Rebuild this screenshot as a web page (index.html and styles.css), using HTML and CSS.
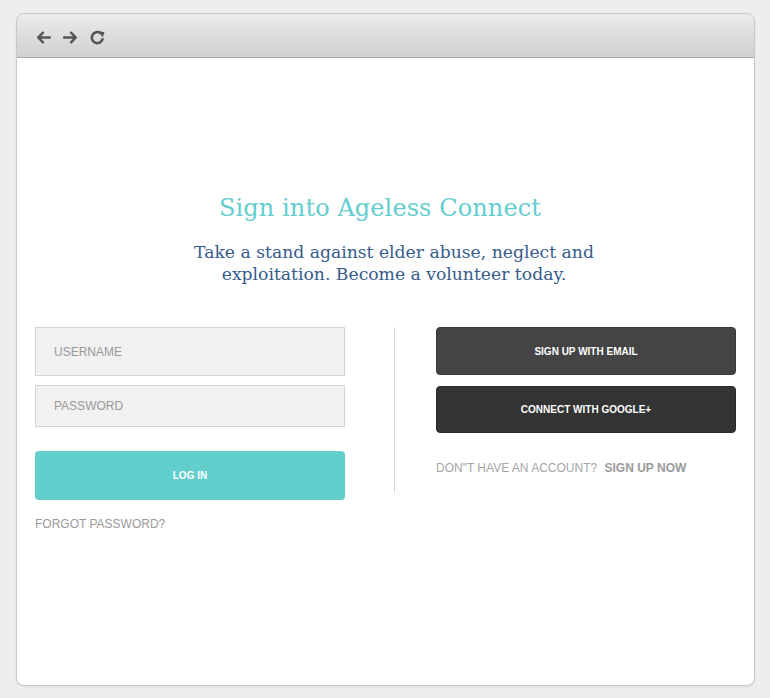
FILE: index.html
```html
<!DOCTYPE html>
<html>
<head>
<meta charset="utf-8">
<link rel="stylesheet" href="styles.css">
</head>
<body>
<div class="window">
  <div class="toolbar">
    <svg class="icon" viewBox="0 0 16 16" width="17" height="17"><path d="M14 8H3M7.5 3.5L3 8l4.5 4.5" fill="none" stroke="#555" stroke-width="2.3" stroke-linecap="round" stroke-linejoin="round"/></svg>
    <svg class="icon" viewBox="0 0 16 16" width="17" height="17"><path d="M2 8h11M8.5 3.5L13 8l-4.5 4.5" fill="none" stroke="#555" stroke-width="2.3" stroke-linecap="round" stroke-linejoin="round"/></svg>
    <svg class="icon" viewBox="0 0 16 16" width="17" height="17"><path d="M12.8 9.6A5.2 5.2 0 1 1 11 4" fill="none" stroke="#555" stroke-width="2.4" stroke-linecap="round"/><path d="M9 1.8L14.6 3 12.8 8Z" fill="#555"/></svg>
  </div>
  <div class="content">
    <h1 class="title">Sign into Ageless Connect</h1>
    <p class="subtitle">Take a stand against elder abuse, neglect and<br>exploitation. Become a volunteer today.</p>
    <div class="columns">
      <div class="left">
        <div class="field field-user">USERNAME</div>
        <div class="field field-pass">PASSWORD</div>
        <div class="btn btn-login">LOG IN</div>
        <div class="forgot">FORGOT PASSWORD?</div>
      </div>
      <div class="divider"></div>
      <div class="right">
        <div class="btn btn-email">SIGN UP WITH EMAIL</div>
        <div class="btn btn-google">CONNECT WITH GOOGLE+</div>
        <div class="signup">DON"T HAVE AN ACCOUNT? <span class="signup-now">SIGN UP NOW</span></div>
      </div>
    </div>
  </div>
</div>
</body>
</html>
```
FILE: styles.css
```css
html, body { margin: 0; padding: 0; }
body {
  background: #eeeeee;
  width: 770px;
  height: 698px;
  overflow: hidden;
  font-family: "Liberation Sans", Arial, sans-serif;
}
.window {
  margin: 13px 0 0 16px;
  width: 737px;
  height: 671px;
  background: #fff;
  border: 1px solid #c8c8c8;
  border-radius: 8px;
  overflow: hidden;
  box-shadow: 0 1px 2px rgba(0,0,0,0.08);
}
.toolbar {
  box-sizing: border-box;
  height: 44px;
  border-bottom: 1px solid #a9a9a9;
  background: linear-gradient(#ebebeb, #d0d0d0);
  display: flex;
  align-items: center;
  gap: 10px;
  padding-left: 18px;
  padding-top: 3px;
}
.icon { display: block; }
.content {
  padding-top: 134px;
  text-align: center;
}
.title {
  margin: 0;
  padding-right: 11px;
  font-family: "DejaVu Serif", serif;
  font-weight: normal;
  font-size: 24px;
  color: #64cdcd;
  line-height: 32px;
  letter-spacing: 0.1px;
}
.subtitle {
  margin: 17px 0 0;
  padding-left: 17px;
  font-family: "DejaVu Serif", serif;
  font-size: 17.2px;
  line-height: 22px;
  color: #365b8c;
}
.columns {
  display: flex;
  padding-left: 18px;
  margin-top: 42px;
  text-align: left;
}
.left { width: 310px; }
.field {
  box-sizing: border-box;
  background: #f1f1f1;
  border: 1px solid #d4d4d4;
  color: #999;
  font-size: 12px;
  padding-left: 18px;
  display: flex;
  align-items: center;
}
.field-user { height: 49px; }
.field-pass { height: 42px; margin-top: 9px; }
.btn {
  box-sizing: border-box;
  display: flex;
  align-items: center;
  justify-content: center;
  color: #fff;
  font-weight: bold;
  font-size: 10px;
  border-radius: 4px;
}
.btn-login {
  background: #62cfcd;
  height: 49px;
  margin-top: 24px;
}
.forgot {
  margin-top: 17px;
  color: #9a9a9a;
  font-size: 12px;
}
.divider {
  width: 1px;
  height: 166px;
  background: #d8d8d8;
  margin-left: 49px;
}
.right {
  width: 300px;
  margin-left: 41px;
}
.btn-email {
  height: 48px;
  background: #444;
  border: 1px solid #383838;
}
.btn-google {
  height: 47px;
  margin-top: 11px;
  background: #333;
  border: 1px solid #2a2a2a;
}
.signup {
  margin-top: 28px;
  font-size: 12px;
  color: #a5a5a5;
}
.signup-now {
  font-weight: bold;
  color: #9a9a9a;
  margin-left: 4px;
}
```
